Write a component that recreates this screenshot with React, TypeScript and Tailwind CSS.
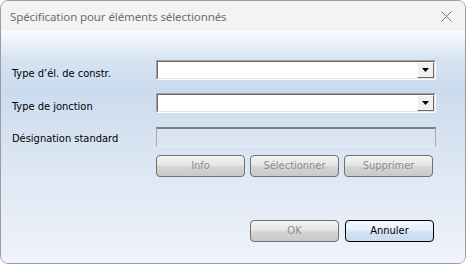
import React from "react";

const labelFont = "font-['DejaVu_Sans_Condensed','Liberation_Sans',sans-serif] text-[11px] text-black";

function Combo() {
  return (
    <div className="w-[280px] h-[20px] border-t border-l border-[#a0a0a0] border-b border-r border-b-white border-r-white">
      <div className="h-full border-t border-l border-[#696969] border-b border-r border-b-[#e3e3e3] border-r-[#e3e3e3] bg-white flex justify-end">
        <div className="w-[17px] h-full bg-[#f0f0f0] border-t border-l border-white border-b border-r border-b-[#696969] border-r-[#696969] flex items-center justify-center">
          <svg width="7" height="4" viewBox="0 0 7 4">
            <polygon points="0,0 7,0 3.5,4" fill="#000" />
          </svg>
        </div>
      </div>
    </div>
  );
}

function Btn({ label, primary, disabled }: { label: string; primary?: boolean; disabled?: boolean }) {
  return (
    <div
      className={
        "w-[89px] h-[22px] rounded-[4px] border flex items-center justify-center " +
        labelFont +
        " " +
        (primary
          ? "border-black bg-[linear-gradient(#f3f7fc,#e6eff9_45%,#d3e2f3_55%,#c9dbef)]"
          : "border-[#707070] bg-[linear-gradient(#f3f3f3,#e6e6e6_45%,#d4d4d4_55%,#c9c9c9)]")
      }
    >
      <span className={disabled ? "text-[#8d8d8d]" : "text-black"}>{label}</span>
    </div>
  );
}

export default function App() {
  return (
    <div className="w-[466px] h-[264px] rounded-[8px] border border-[#9c9c9c] overflow-hidden flex flex-col bg-[#f3f3f3]">
      <div className="h-[30px] shrink-0 flex items-center justify-between pl-[9px] pr-[13px] pt-[1px] bg-[#f3f3f3]">
        <span className="font-['Noto_Sans','Open_Sans',sans-serif] text-[11.5px] text-[#6e6e6e] tracking-[-0.1px]">
          Spécification pour éléments sélectionnés
        </span>
        <svg width="11" height="11" viewBox="0 0 11 11">
          <path d="M0.5 0.5 L10.5 10.5 M10.5 0.5 L0.5 10.5" stroke="#7a7a7a" strokeWidth="1" />
        </svg>
      </div>
      <div className="flex-1 flex flex-col pl-[11px] pt-[29px] bg-[linear-gradient(#f9fbff,#d6e3f2_12%,#cbdbee_25%,#d9e4f2_50%,#eff3fb)]">
        <div className="flex items-center h-[20px]">
          <span className={labelFont + " w-[144px] pt-[8px]"}>Type d’él. de constr.</span>
          <Combo />
        </div>
        <div className="flex items-center h-[20px] mt-[13px]">
          <span className={labelFont + " w-[144px] pt-[8px]"}>Type de jonction</span>
          <Combo />
        </div>
        <div className="flex items-center h-[20px] mt-[14px]">
          <span className={labelFont + " w-[144px] pt-[5px]"}>Désignation standard</span>
          <div className="w-[280px] h-[20px] border-t-2 border-t-[#7f7f7f] border-l border-r border-[#a9a9a9] border-b border-b-[#e6edf6] bg-[#dbe5f2]" />
        </div>
        <div className="flex ml-[144px] mt-[8px] gap-[5px]">
          <Btn label="Info" disabled />
          <Btn label="Sélectionner" disabled />
          <Btn label="Supprimer" disabled />
        </div>
        <div className="flex ml-[238px] mt-[43px] gap-[6px]">
          <Btn label="OK" disabled />
          <Btn label="Annuler" primary />
        </div>
      </div>
    </div>
  );
}
